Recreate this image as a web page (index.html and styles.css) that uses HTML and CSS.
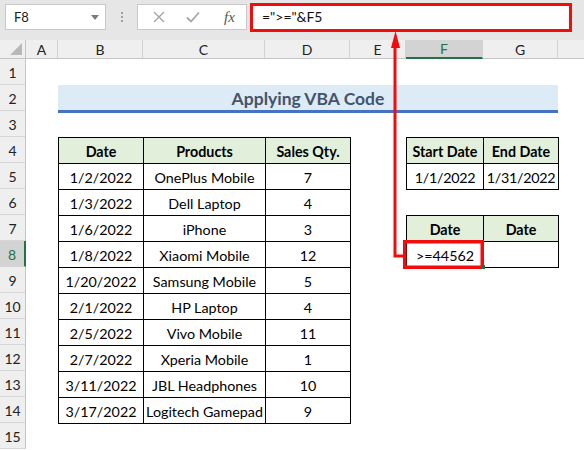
FILE: index.html
```html
<!DOCTYPE html>
<html>
<head>
<meta charset="utf-8">
<link rel="stylesheet" href="styles.css">
</head>
<body>
<div class="app">
  <div class="toolbar">
    <div class="namebox"><span class="nb-text">F8</span><span class="nb-arrow"></span></div>
    <div class="dots"><span></span><span></span><span></span></div>
    <div class="fxbox">
      <svg class="ico" width="14" height="14" viewBox="0 0 14 14"><path d="M2 2 L12 12 M12 2 L2 12" stroke="#a6a6a6" stroke-width="1.4" fill="none"/></svg>
      <svg class="ico" width="16" height="14" viewBox="0 0 16 14"><path d="M2 7.5 L6 11.5 L14 2.5" stroke="#a6a6a6" stroke-width="1.8" fill="none"/></svg>
      <span class="fx">fx</span>
    </div>
    <div class="formula">="&gt;="&amp;F5</div>
  </div>
  <div class="sheet">
    <div class="ch corner"><span class="tri"></span></div>
    <div class="ch">A</div>
    <div class="ch">B</div>
    <div class="ch">C</div>
    <div class="ch">D</div>
    <div class="ch">E</div>
    <div class="ch sel">F</div>
    <div class="ch">G</div>
    <div class="ch last"></div>

    <div class="rh">1</div>
    <div class="rh">2</div>
    <div class="rh">3</div>
    <div class="rh">4</div>
    <div class="rh">5</div>
    <div class="rh">6</div>
    <div class="rh">7</div>
    <div class="rh sel">8</div>
    <div class="rh">9</div>
    <div class="rh">10</div>
    <div class="rh">11</div>
    <div class="rh">12</div>
    <div class="rh">13</div>
    <div class="rh">14</div>
    <div class="rh">15</div>

    <div class="title">Applying VBA Code</div>

    <div class="tbl t-main">
      <div class="hd">Date</div><div class="hd">Products</div><div class="hd">Sales Qty.</div>
      <div>1/2/2022</div><div>OnePlus Mobile</div><div>7</div>
      <div>1/3/2022</div><div>Dell Laptop</div><div>4</div>
      <div>1/6/2022</div><div>iPhone</div><div>3</div>
      <div>1/8/2022</div><div>Xiaomi Mobile</div><div>12</div>
      <div>1/20/2022</div><div>Samsung Mobile</div><div>5</div>
      <div>2/1/2022</div><div>HP Laptop</div><div>4</div>
      <div>2/5/2022</div><div>Vivo Mobile</div><div>11</div>
      <div>2/7/2022</div><div>Xperia Mobile</div><div>1</div>
      <div>3/11/2022</div><div>JBL Headphones</div><div>10</div>
      <div>3/17/2022</div><div>Logitech Gamepad</div><div>9</div>
    </div>

    <div class="tbl t-range">
      <div class="hd">Start Date</div><div class="hd">End Date</div>
      <div>1/1/2022</div><div>1/31/2022</div>
    </div>

    <div class="tbl t-crit">
      <div class="hd">Date</div><div class="hd">Date</div>
      <div>&gt;=44562</div><div></div>
    </div>
  </div>

  <svg class="overlay" width="584" height="450" viewBox="0 0 584 450">
    <polyline points="405,256 395,256 395,44" fill="none" stroke="#f20c0c" stroke-width="3"/>
    <polygon points="395.5,31 391,48 400,48" fill="#f20c0c"/>
    <rect x="404.75" y="241.75" width="77.5" height="25.5" fill="none" stroke="#f20c0c" stroke-width="3.5"/>
    <rect x="481" y="265" width="4" height="4" fill="#217346"/>
  </svg>
</div>
</body>
</html>
```

FILE: styles.css
```css
html, body {
  margin: 0;
  padding: 0;
  background: #ffffff;
}
body {
  font-family: Lato, "Open Sans", "Liberation Sans", sans-serif;
  color: #000;
}
.app {
  position: relative;
  width: 584px;
  height: 450px;
  overflow: hidden;
}
.toolbar {
  height: 40px;
  background: #e6e6e6;
  display: flex;
  align-items: flex-start;
  box-sizing: border-box;
  padding-top: 4px;
}
.namebox {
  margin-left: 5px;
  width: 101px;
  height: 26px;
  box-sizing: border-box;
  background: #fff;
  border: 1px solid #c8c8c8;
  display: flex;
  align-items: center;
  justify-content: space-between;
  padding: 0 6px 0 8px;
  font-size: 13px;
  color: #222;
}
.nb-arrow {
  width: 0;
  height: 0;
  border-left: 4.5px solid transparent;
  border-right: 4.5px solid transparent;
  border-top: 5px solid #7a7a7a;
}
.dots {
  width: 31px;
  height: 26px;
  display: flex;
  flex-direction: column;
  align-items: center;
  justify-content: center;
  gap: 2px;
}
.dots span {
  width: 2px;
  height: 2px;
  background: #a0a0a0;
}
.fxbox {
  width: 110px;
  height: 26px;
  box-sizing: border-box;
  background: #fff;
  border: 1px solid #c8c8c8;
  display: flex;
  align-items: center;
  padding-left: 14px;
  gap: 19px;
}
.fx {
  font-family: "Liberation Serif", serif;
  font-style: italic;
  font-size: 15px;
  color: #555;
  margin-left: 4px;
}
.formula {
  margin-left: 3px;
  margin-top: -1px;
  width: 322px;
  height: 29px;
  box-sizing: border-box;
  background: #fff;
  border: 3px solid #f20c0c;
  font-size: 14px;
  padding-left: 9px;
  line-height: 22px;
  color: #111;
}
.sheet {
  display: grid;
  grid-template-columns: 26px 32px 85px 122px 85px 56px 77px 75px 1fr;
  grid-template-rows: 19px repeat(15, 26px);
}
.ch {
  background: #efefef;
  border-right: 1px solid #d2d2d2;
  border-bottom: 1px solid #c4c4c4;
  box-sizing: border-box;
  font-size: 14px;
  color: #222;
  display: flex;
  align-items: center;
  justify-content: center;
}
.ch.sel {
  background: #d3d3d3;
  color: #217346;
  border-bottom: 2px solid #217346;
}
.ch.last {
  border-right: none;
}
.corner {
  position: relative;
  border-right: 1px solid #c4c4c4;
}
.tri {
  position: absolute;
  right: 3px;
  bottom: 3px;
  width: 0;
  height: 0;
  border-left: 12px solid transparent;
  border-bottom: 12px solid #b8b8b8;
}
.rh {
  grid-column: 1;
  background: #efefef;
  border-right: 1px solid #c4c4c4;
  border-bottom: 1px solid #d6d6d6;
  box-sizing: border-box;
  font-size: 14px;
  color: #222;
  display: flex;
  align-items: flex-end;
  justify-content: center;
  padding-bottom: 3px;
}
.rh.sel {
  background: #d3d3d3;
  color: #217346;
  border-right: 2px solid #217346;
}
.title {
  grid-column: 3 / 9;
  grid-row: 3;
  background: #ddebf7;
  border-bottom: 3px solid #4472c4;
  box-sizing: border-box;
  font-weight: bold;
  font-size: 17.5px;
  color: #44546a;
  display: flex;
  align-items: center;
  justify-content: center;
  padding-top: 2px;
  height: 28px;
}
.tbl {
  display: grid;
  gap: 1px;
  background: #000;
  border: 1px solid #000;
  align-self: start;
  justify-self: start;
  grid-auto-rows: 25px;
}
.tbl > div {
  background: #fff;
  display: flex;
  align-items: center;
  justify-content: center;
  font-size: 14.3px;
  padding-top: 2px;
  box-sizing: border-box;
  white-space: nowrap;
}
.tbl > .hd {
  background: #e2efda;
  font-weight: bold;
}
.t-main {
  grid-column: 3 / 6;
  grid-row: 5 / 16;
  grid-template-columns: 84px 121px 84px;
}
.t-range {
  grid-column: 7 / 9;
  grid-row: 5 / 7;
  grid-template-columns: 76px 74px;
}
.t-range > div:not(.hd) {
  letter-spacing: -0.3px;
}
.t-crit {
  grid-column: 7 / 9;
  grid-row: 8 / 10;
  grid-template-columns: 76px 74px;
}
.overlay {
  position: absolute;
  left: 0;
  top: 0;
  pointer-events: none;
}
```
